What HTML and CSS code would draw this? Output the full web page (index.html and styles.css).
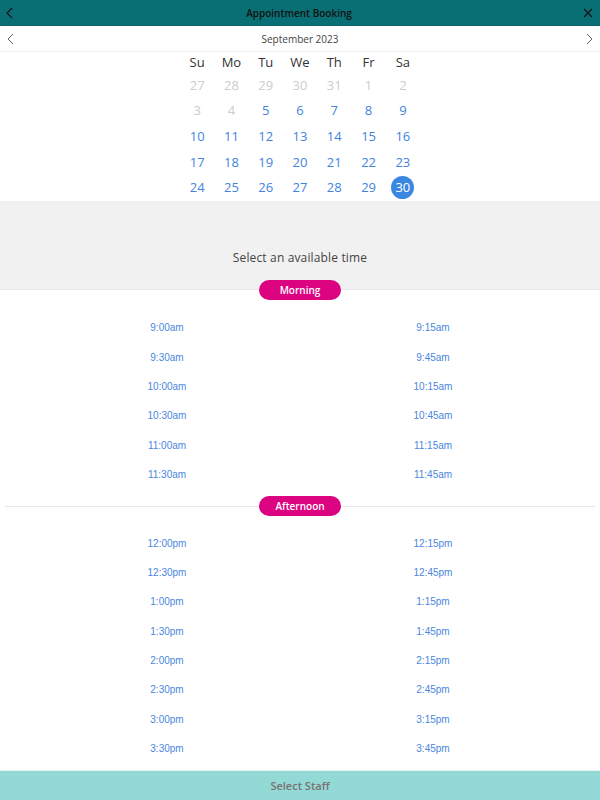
FILE: index.html
```
<!DOCTYPE html>
<html>
	<head>
		<meta charset="utf-8">
		<title>Appointment Booking</title>
		<link rel="stylesheet" href="styles.css">
	</head>
	<body>
		<div class="page">
			<div class="topbar">
				<a class="iconbtn">
					<svg width="10" height="12" viewBox="0 0 10 12"><path d="M7 1 L2 6 L7 11" fill="none" stroke="#111" stroke-width="1.1"/></svg>
				</a>
				<div class="title">Appointment Booking</div>
				<a class="iconbtn">
					<svg width="10" height="10" viewBox="0 0 10 10"><path d="M1 1 L9 9 M9 1 L1 9" fill="none" stroke="#111" stroke-width="1.2"/></svg>
				</a>
			</div>

			<div class="monthbar">
				<a class="iconbtn">
					<svg width="10" height="12" viewBox="0 0 10 12"><path d="M7 1 L2 6 L7 11" fill="none" stroke="#666" stroke-width="1"/></svg>
				</a>
				<div class="month">September 2023</div>
				<a class="iconbtn">
					<svg width="10" height="12" viewBox="0 0 10 12"><path d="M3 1 L8 6 L3 11" fill="none" stroke="#666" stroke-width="1"/></svg>
				</a>
			</div>

			<div class="calendar">
				<div class="wd">Su</div><div class="wd">Mo</div><div class="wd">Tu</div><div class="wd">We</div><div class="wd">Th</div><div class="wd">Fr</div><div class="wd">Sa</div>

				<div class="day off">27</div><div class="day off">28</div><div class="day off">29</div><div class="day off">30</div><div class="day off">31</div><div class="day off">1</div><div class="day off">2</div>
				<div class="day off">3</div><div class="day off">4</div><div class="day">5</div><div class="day">6</div><div class="day">7</div><div class="day">8</div><div class="day">9</div>
				<div class="day">10</div><div class="day">11</div><div class="day">12</div><div class="day">13</div><div class="day">14</div><div class="day">15</div><div class="day">16</div>
				<div class="day">17</div><div class="day">18</div><div class="day">19</div><div class="day">20</div><div class="day">21</div><div class="day">22</div><div class="day">23</div>
				<div class="day">24</div><div class="day">25</div><div class="day">26</div><div class="day">27</div><div class="day">28</div><div class="day">29</div><div class="day"><span class="sel">30</span></div>
			</div>

			<div class="pick">Select an available time</div>

			<div class="divider first"><span class="pill">Morning</span></div>
			<div class="slots am">
				<a>9:00am</a><a>9:15am</a>
				<a>9:30am</a><a>9:45am</a>
				<a>10:00am</a><a>10:15am</a>
				<a>10:30am</a><a>10:45am</a>
				<a>11:00am</a><a>11:15am</a>
				<a>11:30am</a><a>11:45am</a>
			</div>

			<div class="divider"><span class="pill">Afternoon</span></div>
			<div class="slots">
				<a>12:00pm</a><a>12:15pm</a>
				<a>12:30pm</a><a>12:45pm</a>
				<a>1:00pm</a><a>1:15pm</a>
				<a>1:30pm</a><a>1:45pm</a>
				<a>2:00pm</a><a>2:15pm</a>
				<a>2:30pm</a><a>2:45pm</a>
				<a>3:00pm</a><a>3:15pm</a>
				<a>3:30pm</a><a>3:45pm</a>
			</div>

			<div class="footer">Select Staff</div>
		</div>
	</body>
</html>
```

FILE: styles.css
```
body{
	margin:0;
	font-family:"Open Sans", "Noto Sans", sans-serif;
	background-color:#fff;
}
.page{
	height:800px;
	display:flex;
	flex-direction:column;
	overflow:hidden;
}

.topbar{
	height:25px;
	background-color:#0a6f74;
	border-bottom:1px solid #0b5f63;
	display:flex;
	align-items:center;
	padding:0 6px 0 4px;
}
.title{
	flex:1;
	text-align:center;
	font-size:10px;
	font-weight:600;
	color:#111;
}
.iconbtn{
	width:12px;
	display:flex;
	justify-content:center;
	align-items:center;
}

.monthbar{
	height:25px;
	border-bottom:1px solid #eceff0;
	display:flex;
	align-items:center;
	padding:0 5px;
}
.month{
	flex:1;
	text-align:center;
	font-size:10px;
	color:#444;
}

.calendar{
	width:240px;
	margin:0 auto;
	display:grid;
	grid-template-columns:repeat(7, 1fr);
	grid-template-rows:20px;
	grid-auto-rows:25.6px;
	font-size:13px;
}
.wd{
	display:flex;
	align-items:center;
	justify-content:center;
	color:#333;
}
.day{
	display:flex;
	align-items:center;
	justify-content:center;
	color:#4283dd;
}
.day.off{
	color:#cbcdce;
}
.sel{
	width:23px;
	height:23px;
	border-radius:50%;
	background-color:#3a87e2;
	color:#fff;
	display:flex;
	align-items:center;
	justify-content:center;
}

.pick{
	margin-top:1px;
	height:89px;
	background-color:#f1f1f1;
	display:flex;
	align-items:flex-end;
	justify-content:center;
	padding-bottom:24px;
	box-sizing:border-box;
	font-size:12px;
	letter-spacing:0.15px;
	color:#444;
}

.divider{
	display:flex;
	align-items:center;
	height:20px;
	margin:7px 5px 0;
}
.divider::before, .divider::after{
	content:"";
	flex:1;
	height:1px;
	background-color:#e3e7e8;
}
.divider.first{
	margin:-10px 0 0;
}
.pill{
	width:82px;
	height:20px;
	border-radius:10px;
	background-color:#dc0381;
	color:#fff;
	font-size:10px;
	font-weight:600;
	display:flex;
	align-items:center;
	justify-content:center;
}

.slots{
	display:grid;
	grid-template-columns:1fr 1fr;
	grid-auto-rows:29.4px;
	padding:12px 34px 0;
}
.slots.am{
	padding-top:13px;
}
.slots a{
	display:flex;
	align-items:center;
	justify-content:center;
	font-family:"Liberation Sans", Arial, sans-serif;
	font-size:10px;
	color:#4a86e0;
}

.footer{
	margin-top:auto;
	height:29px;
	background-color:#93d9d5;
	border-top:1px solid #e6f2f1;
	display:flex;
	align-items:center;
	justify-content:center;
	font-size:11px;
	font-weight:600;
	color:#7a7272;
}
```
